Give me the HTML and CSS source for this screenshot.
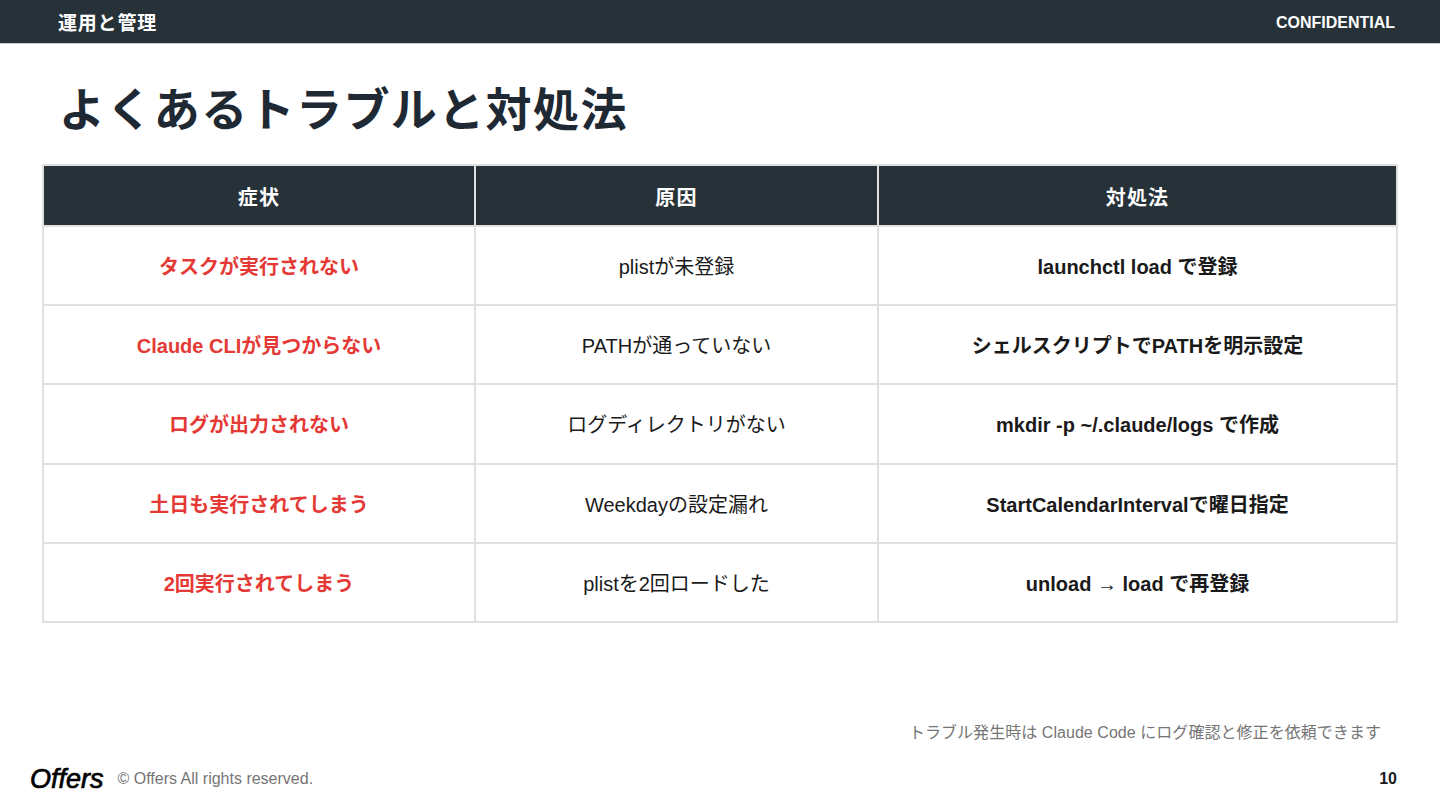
FILE: index.html
```html
<!DOCTYPE html>
<html lang="ja">
<head>
<meta charset="utf-8">
<title>よくあるトラブルと対処法</title>
<link rel="stylesheet" href="styles.css">
</head>
<body>
<div class="slide">
  <header class="topbar">
    <span class="section">運用と管理</span>
    <span class="conf">CONFIDENTIAL</span>
  </header>
  <h1 class="title">よくあるトラブルと対処法</h1>
  <table class="grid">
    <colgroup><col class="c1"><col class="c2"><col class="c3"></colgroup>
    <thead>
      <tr><th>症状</th><th>原因</th><th>対処法</th></tr>
    </thead>
    <tbody>
      <tr><td class="sym">タスクが実行されない</td><td>plistが未登録</td><td class="fix">launchctl load で登録</td></tr>
      <tr><td class="sym">Claude CLIが見つからない</td><td>PATHが通っていない</td><td class="fix">シェルスクリプトでPATHを明示設定</td></tr>
      <tr><td class="sym">ログが出力されない</td><td>ログディレクトリがない</td><td class="fix">mkdir -p ~/.claude/logs で作成</td></tr>
      <tr><td class="sym">土日も実行されてしまう</td><td>Weekdayの設定漏れ</td><td class="fix">StartCalendarIntervalで曜日指定</td></tr>
      <tr><td class="sym">2回実行されてしまう</td><td>plistを2回ロードした</td><td class="fix">unload → load で再登録</td></tr>
    </tbody>
  </table>
  <p class="note">トラブル発生時は Claude Code にログ確認と修正を依頼できます</p>
  <footer class="foot">
    <div class="brand"><span class="logo">Offers</span><span class="copy">© Offers All rights reserved.</span></div>
    <span class="page">10</span>
  </footer>
</div>
</body>
</html>
```
FILE: styles.css
```css
* { box-sizing: border-box; }
html, body { margin: 0; padding: 0; }
body {
  width: 1440px;
  height: 810px;
  overflow: hidden;
  background: #fff;
  font-family: "Liberation Sans", "Noto Sans CJK JP", sans-serif;
  color: #1a1a1a;
}
.slide { width: 1440px; height: 810px; display: flex; flex-direction: column; }
.topbar {
  height: 44px;
  flex: none;
  background: #263238;
  border-bottom: 1px solid #c8cccf;
  display: flex;
  align-items: center;
  justify-content: space-between;
  padding: 0 45px 0 58px;
  color: #fff;
  font-weight: 700;
}
.section { font-size: 19px; letter-spacing: 0.8px; }
.conf { font-size: 16px; padding-top: 2px; }
.title {
  margin: 0;
  height: 120px;
  padding: 33px 0 0 59px;
  font-size: 46px;
  line-height: 66px;
  font-weight: 700;
  color: #1f2933;
  letter-spacing: 1.4px;
}
.grid {
  margin-left: 42px;
  width: 1354px;
  table-layout: fixed;
  border-collapse: collapse;
  font-size: 20px;
}
.c1 { width: 432px; }
.c2 { width: 403px; }
.c3 { width: 519px; }
.grid th, .grid td { border: 2px solid #e0e0e0; text-align: center; padding: 0; }
.grid th {
  height: 61px;
  padding-top: 2px;
  background: #263238;
  color: #fff;
  font-size: 20px;
  font-weight: 700;
  letter-spacing: 1.2px;
}
.grid td { height: 79.2px; }
.grid .sym { color: #e53935; font-weight: 700; }
.grid .fix { font-weight: 700; }
.note {
  margin: 99px 59px 0 0;
  text-align: right;
  font-size: 16px;
  line-height: 22px;
  letter-spacing: 0.05px;
  color: #757575;
}
.foot {
  margin-top: 21px;
  padding: 0 43px 0 30px;
  display: flex;
  align-items: center;
  justify-content: space-between;
}
.brand { display: flex; align-items: center; gap: 14px; }
.logo {
  font-family: "Liberation Sans", sans-serif;
  font-style: italic;
  font-weight: 400;
  font-size: 27px;
  -webkit-text-stroke: 0.7px #000;
  color: #000;
  line-height: 28px;
}
.copy { font-size: 16px; color: #757575; }
.page { font-size: 16px; font-weight: 700; }
```
